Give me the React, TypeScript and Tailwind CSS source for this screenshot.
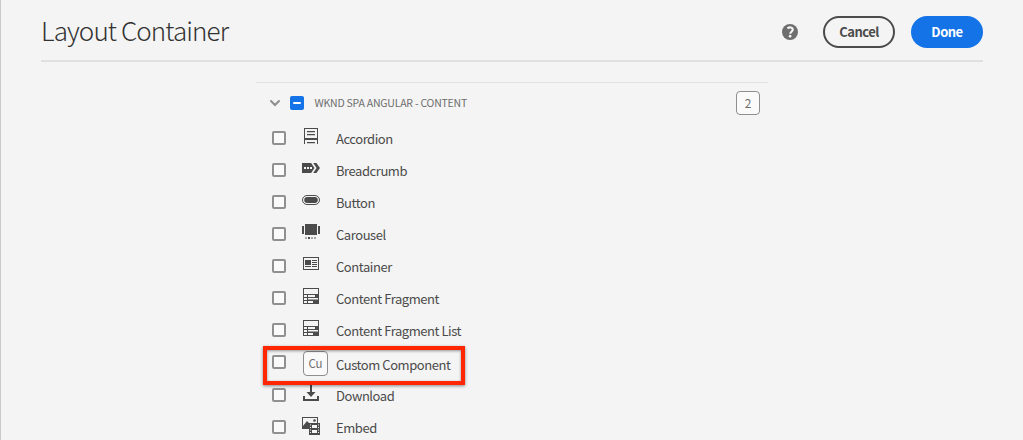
import type { ReactNode } from 'react';

const INK = '#4b4b4b';

function Glyph({ children }: { children: ReactNode }) {
  return (
    <svg width="27" height="32" viewBox="0 0 27 32" fill={INK} className="block shrink-0">
      {children}
    </svg>
  );
}

function AccordionIcon() {
  return (
    <Glyph>
      <path d="M2 6h14v16h-1v-4H3v4H2zM3 7v9h12V7z" fillRule="evenodd" />
      <path d="M5 9h8v1.3H5zM5 12h8v1.3H5zM5 20h8v1.2H5z" />
    </Glyph>
  );
}

function BreadcrumbIcon() {
  return (
    <Glyph>
      <path d="M0 9h9.2l3.3 5-3.3 5H0z" />
      <path d="M11.2 9h3.2l3.6 5-3.6 5h-3.2l3.4-5z" />
      <path d="M2 13h2v2H2zM5 13h2v2H5zM8 13h2v2H8z" fill="#f4f4f4" />
    </Glyph>
  );
}

function ButtonIcon() {
  return (
    <Glyph>
      <rect x="0.5" y="9.5" width="17" height="9" rx="4.5" fill="none" stroke={INK} />
      <rect x="2.2" y="11" width="13.6" height="6" rx="3" />
    </Glyph>
  );
}

function CarouselIcon() {
  return (
    <Glyph>
      <path d="M3 6h12v11H3zM0 8h2v8H0zM16 8h2v8h-2z" />
      <path d="M6 19h2v2H6z" />
      <path d="M3 19h2v2H3zM9 19h2v2H9zM12 19h2v2h-2z" opacity="0.45" />
    </Glyph>
  );
}

function ContainerIcon() {
  return (
    <Glyph>
      <rect x="1.5" y="7.5" width="15" height="12" fill="none" stroke={INK} />
      <path d="M3 10h6v5H3zM10 10h5v1h-5zM10 12h5v1h-5zM10 14h5v1h-5zM3 16h6v1H3zM10 16h5v1h-5z" />
    </Glyph>
  );
}

function FragmentIcon() {
  return (
    <Glyph>
      <path d="M1 6h16v16H1zM2 7v5h14V7z" fillRule="evenodd" />
      <path d="M2 13h3v2H2zM6 13h7v2H6zM2 16h3v2H2zM6 16h10v1.5H6zM2 19h3v2H2zM6 19h5v2H6z" fill="#f4f4f4" />
    </Glyph>
  );
}

function DownloadIcon() {
  return (
    <Glyph>
      <path d="M8 5h2v8h3.5L9 18l-4.5-5H8zM1 17h2v3h12v-3h2v5H1z" />
    </Glyph>
  );
}

function EmbedIcon() {
  return (
    <Glyph>
      <path d="M0 6h16v6h-1V7H1v8l4-5 2 2v6H0z" />
      <circle cx="12.5" cy="9.5" r="1.3" />
      <path d="M7 12h11v12H7z" />
      <path d="M10 14h5v3h-5zM10 19h5v3h-5zM8 13.5h1v1H8zM8 16h1v1H8zM8 18.5h1v1H8zM8 21h1v1H8zM16 13.5h1v1h-1zM16 16h1v1h-1zM16 18.5h1v1h-1zM16 21h1v1h-1z" fill="#f4f4f4" />
    </Glyph>
  );
}

function CustomIcon() {
  return (
    <span className="mt-[5px] ml-px flex h-[25px] w-[25px] shrink-0 items-center justify-center rounded-[4px] border border-[#8e8e8e] bg-[#fafafa] text-[11.5px] leading-none tracking-[-0.2px] text-[#6e6e6e]">
      Cu
    </span>
  );
}

function Checkbox() {
  return <span className="mt-[9px] h-[14px] w-[14px] shrink-0 rounded-[2px] border-2 border-[#909090] bg-[#fafafa]" />;
}

interface Item {
  label: string;
  icon: ReactNode;
  highlighted?: boolean;
}

const items: Item[] = [
  { label: 'Accordion', icon: <AccordionIcon /> },
  { label: 'Breadcrumb', icon: <BreadcrumbIcon /> },
  { label: 'Button', icon: <ButtonIcon /> },
  { label: 'Carousel', icon: <CarouselIcon /> },
  { label: 'Container', icon: <ContainerIcon /> },
  { label: 'Content Fragment', icon: <FragmentIcon /> },
  { label: 'Content Fragment List', icon: <FragmentIcon /> },
  { label: 'Custom Component', icon: <CustomIcon />, highlighted: true },
  { label: 'Download', icon: <DownloadIcon /> },
  { label: 'Embed', icon: <EmbedIcon /> },
];

function Row({ item }: { item: Item }) {
  return (
    <li className={item.highlighted ? 'relative flex h-[33px] pl-4' : 'flex h-8 pl-4'}>
      <Checkbox />
      <span className="ml-4 flex w-[34px] shrink-0 items-start">{item.icon}</span>
      <span className={`${item.highlighted ? 'pt-[9px]' : 'pt-[7px]'} text-[13px] leading-5 tracking-[-0.44px] whitespace-nowrap text-[#4b4b4b]`}>
        {item.label}
      </span>
      {item.highlighted && (
        <span className="absolute top-0 left-[7px] z-10 h-[39px] w-[202px] border-4 border-[#ff2600] shadow-[0_1px_3px_rgba(0,0,0,0.45),inset_0_1px_3px_rgba(0,0,0,0.4)]" />
      )}
    </li>
  );
}

export default function App() {
  return (
    <div className="h-[440px] w-full overflow-hidden border-l border-[#cacaca] bg-[#f4f4f4] pr-10 pl-10 font-['Noto_Sans_CJK_SC',sans-serif]">
      <header className="flex h-[62px] items-start border-b-2 border-[#e0e0e0]">
        <h1 className="mt-[10px] flex-1 text-[26px] leading-10 font-light tracking-[-0.9px] whitespace-nowrap text-[#323232]">Layout Container</h1>
        <svg width="16" height="16" viewBox="0 0 16 16" className="mt-6 mr-[25px]">
          <circle cx="8" cy="8" r="8" fill="#6e6e6e" />
          <path d="M5.4 4.3C7.6 2.7 10.8 3.2 10.8 5.6C10.8 7.6 8.2 7.8 8.2 9.8" fill="none" stroke="#f4f4f4" strokeWidth="2.1" />
          <circle cx="8.1" cy="12.2" r="1.35" fill="#f4f4f4" />
        </svg>
        <button className="mt-4 mr-4 h-8 w-[72px] rounded-full border-2 border-[#4b4b4b] text-[13px] leading-7 font-bold tracking-[-0.5px] text-[#4b4b4b]">Cancel</button>
        <button className="mt-4 h-8 w-[72px] rounded-full bg-[#1473e6] text-[13px] leading-8 font-bold tracking-[-0.5px] text-white">Done</button>
      </header>
      <main className="mt-5 ml-[215px] w-[512px] border-t border-[#e1e1e1]">
        <div className="flex h-[39px] items-start pt-2">
          <svg width="12" height="8" viewBox="0 0 12 8" className="mt-[8px] ml-[13px]">
            <path d="M2 2l4 4 4-4" fill="none" stroke="#8e8e8e" strokeWidth="2" strokeLinecap="round" />
          </svg>
          <span className="mt-[5px] ml-[9px] flex h-[14px] w-[14px] items-center justify-center rounded-[2px] bg-[#1473e6]">
            <span className="h-[2px] w-2 rounded-sm bg-white" />
          </span>
          <span className="mt-[2px] ml-[10.5px] flex-1 text-[10.5px] leading-5 tracking-[-0.22px] whitespace-nowrap text-[#6e6e6e]">WKND SPA ANGULAR - CONTENT</span>
          <span className="mr-2 flex h-6 w-6 items-center justify-center rounded-[4px] border border-[#8e8e8e] bg-[#fafafa] text-[12px] leading-none text-[#6e6e6e]">2</span>
        </div>
        <ul>
          {items.map((item) => (
            <Row key={item.label} item={item} />
          ))}
        </ul>
      </main>
    </div>
  );
}
